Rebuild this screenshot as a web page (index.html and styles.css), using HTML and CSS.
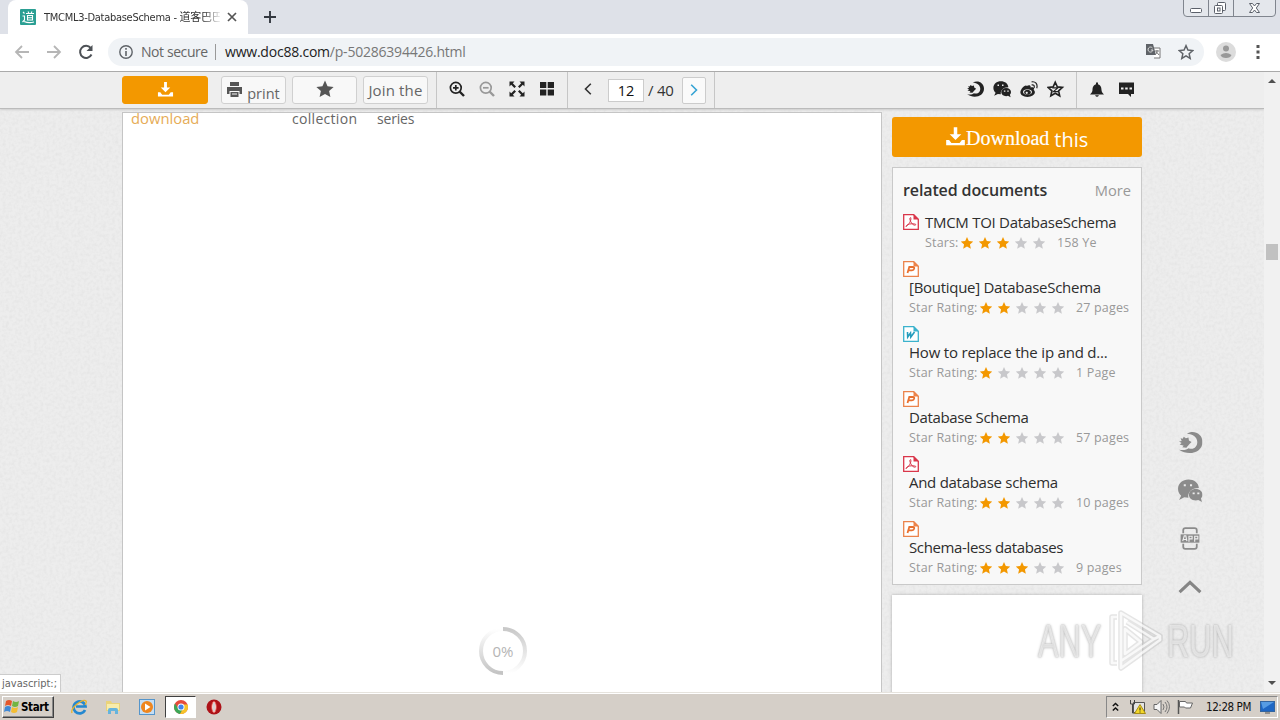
FILE: index.html
```html
<!DOCTYPE html>
<html lang="en">
<head>
<meta charset="utf-8">
<title>TMCML3-DatabaseSchema</title>
<link rel="stylesheet" href="styles.css">
</head>
<body>
<svg class="defs" width="0" height="0">
  <symbol id="star" viewBox="0 0 24 24"><path d="M12 .8l3.400 7.500 8.100.9-6 5.500 1.700 8L12 18.600l-7.200 4.100 1.700-8-6-5.500 8.100-.9z"/></symbol>
  <symbol id="dl" viewBox="0 0 18 18"><path d="M7.500 1h3v6h3.500L9 12 4 7h3.500zM1 12h2.500l2 2.500h7l2-2.500H17v4.500H1z"/></symbol>
  <symbol id="swirl" viewBox="0 0 24 24"><path d="M9 3.500C15-.5 24 3 24 11.500c0 10-13 14-22.500 7.500 5 .8 7.500-.2 9-1.500 5 2 8.500-1.500 8.500-6 0-4.500-4-8-10-8z"/><path d="M3 8l2 .5L6 6.500l2 1.500 2.500-.8.500 2.800 2.500 1.500-2 2-3 3.500-4-.5 1.500-1.500L2 14l2-1.500-2.500-1.500 2.500-.5z"/></symbol>
  <symbol id="wechat" viewBox="0 0 24 24"><path fill-rule="evenodd" d="M10.500 1.500C5 1.500.5 5 .5 10.500c0 3 1.500 5 3 6.500l-2 4 5-2.500 4 .5c-1-5 2.500-9.500 10-9.500-.500-5-4.500-8-10-8zM6 6h2v2H6zm6 0h2v2h-2z"/><path fill-rule="evenodd" d="M17.500 10.500c-4 0-6.500 2.500-6.500 5.500s2.500 5.500 6.500 5.500l2.500-.5 3.500 2-1-3.500c1-1 1.500-2 1.500-3.500 0-3-2.500-5.500-6.500-5.500zM14.500 14h2v1.500h-2zm4.500 0h2v1.500h-2z"/></symbol>
  <symbol id="pdf" viewBox="0 0 16 16"><path d="M.7.7h10l4.600 4.600v10H.7z" fill="#fff" stroke="#d9364a" stroke-width="1.300"/><path d="M10.500 0L16 5.500h-5.500z" fill="#d9364a"/><path d="M7.300 4c-1.300 0 0 3 1.200 5s4 2.800 4.300 1.700S7 9.500 5 10.500s-2.600 2.300-1.700 2S8 7.500 7.900 5 7.300 4 7.300 4z" fill="none" stroke="#d9364a"/></symbol>
  <symbol id="ppt" viewBox="0 0 16 16"><path d="M.7.7h10l4.600 4.600v10H.7z" fill="#fff" stroke="#eb834b" stroke-width="1.300"/><path d="M10.500 0L16 5.500h-5.500z" fill="#eb834b"/><path d="M4.500 12L6.300 6H10c2 0 1.500 3.300-1 3.300H5.700" fill="none" stroke="#e8702f" stroke-width="1.800"/></symbol>
  <symbol id="doc" viewBox="0 0 16 16"><path d="M.7.7h10l4.600 4.600v10H.7z" fill="#fff" stroke="#3bb2cc" stroke-width="1.300"/><path d="M10.500 0L16 5.500h-5.500z" fill="#3bb2cc"/><path d="M4.500 6l.2 5 2.800-4 .3 4L11.500 6" fill="none" stroke="#259dbd" stroke-width="1.600"/></symbol>
</svg>

<header class="tabstrip">
  <div class="tab">
    <svg class="favicon" viewBox="0 0 16 16"><rect width="16" height="16" rx="1" fill="#2b9f93"/><path d="M3 3l1.500 1.500M2.500 7h2v4L2.500 13M4 12.500q5 2 10 .5M6 4.500h8M8 2.500l1 2M12 2.500l-1 2M7.500 6.500h5V11h-5zM7.500 8.700h5" fill="none" stroke="#fff" stroke-width="1.100"/></svg>
    <span class="tab-title">TMCML3-DatabaseSchema - <span class="cjk">道客巴巴</span></span>
    <svg class="tab-close" viewBox="0 0 10 10"><path d="M1 1l8 8M9 1L1 9" stroke="#555" stroke-width="1.700"/></svg>
  </div>
  <svg class="newtab" viewBox="0 0 12 12"><path d="M6 0v12M0 6h12" stroke="#333840" stroke-width="1.900"/></svg>
  <svg class="winbtns" viewBox="0 0 94 17"><path d="M.5 0v13q0 3.500 3.500 3.500h85q3.500 0 3.500-3.500V0M25.500 0v16M50.500 0v16" fill="#e4e7ec" stroke="#80858e"/><g fill="#fff" stroke="#5b606a"><rect x="7.500" y="8.500" width="11" height="4" rx="1"/><rect x="34.500" y="2.500" width="8" height="8" rx="1"/><rect x="31.500" y="5.500" width="8" height="8" rx="1"/><rect x="34.500" y="8" width="2.500" height="3"/><path d="M66.500 3.500h3l2 2.500 2-2.500h3L73.300 8l3.200 4.500h-3l-2-2.500-2 2.500h-3L69.700 8z"/></g></svg>
</header>

<div class="addressbar">
  <svg class="nav-icon" viewBox="0 0 16 16"><path d="M15 8H2M8 2L2 8l6 6" stroke="#b6b6b6"/></svg>
  <svg class="nav-icon" viewBox="0 0 16 16"><path d="M1 8h13M8 2l6 6-6 6" stroke="#b6b6b6"/></svg>
  <svg class="nav-icon reload" viewBox="0 0 16 16"><path d="M13.500 10.500a6 6 0 1 1-.8-6.500" stroke="#4d5156" stroke-width="2"/><path d="M14.500 1v6h-6z" fill="#4d5156" stroke="none"/></svg>
  <div class="omnibox">
    <svg width="14" height="14" viewBox="0 0 14 14"><circle cx="7" cy="7" r="6.200" fill="none" stroke="#5f6368" stroke-width="1.400"/><path d="M7 3v1.700M7 6v5" stroke="#5f6368" stroke-width="1.600"/></svg>
    <span class="secure">Not secure</span>
    <span class="url"><b>www.doc88.com</b>/p-50286394426.html</span>
    <svg class="translate" width="15" height="15" viewBox="0 0 15 15"><path d="M6 4h8v10H8" fill="#fff" stroke="#777"/><path d="M0 0h7l3 11H0z" fill="#5f6368"/><path d="M6.500 4A2.500 2.500 0 1 0 7 6H4.800" fill="none" stroke="#ddd"/><path d="M9 7h4M11 6v1q0 3-2 4M10.500 8l2.500 3" fill="none" stroke="#777"/></svg>
    <svg width="16" height="16" viewBox="0 0 24 24"><path d="M12 2.500l2.900 6.600 7.200.7-5.400 4.800 1.600 7L12 17.800l-6.300 3.800 1.600-7L1.900 9.800l7.200-.7z" fill="none" stroke="#5f6368" stroke-width="2.200"/></svg>
  </div>
  <svg class="avatar" viewBox="0 0 20 20"><circle cx="10" cy="10" r="10" fill="#dcdcdc"/><circle cx="10" cy="6.500" r="3" fill="#999"/><path d="M4.500 13q5.500-4 11 0-1 3-5.500 3t-5.500-3z" fill="#999"/></svg>
  <svg class="menu" viewBox="0 0 4 14"><path d="M.5 0h3v3h-3zm0 5.500h3v3h-3zm0 5.500h3v3h-3z" fill="#555"/></svg>
</div>

<div class="viewport">
  <div class="page">
    <svg class="noise" width="1264" height="620"><filter id="grain"><feTurbulence type="fractalNoise" baseFrequency=".32" numOctaves="2" seed="4" stitchTiles="stitch"/><feColorMatrix values="0 0 0 0 .7  0 0 0 0 .7  0 0 0 0 .7  .8 0 0 0 -.3"/></filter><rect width="1264" height="620" filter="url(#grain)"/></svg>
    <nav class="sitebar">
      <div class="actions">
        <div class="btn primary"><svg width="17" height="17"><use href="#dl"/></svg><span class="wrap dlw">download</span></div>
        <div class="btn print"><svg width="15" height="15" viewBox="0 0 15 15"><path fill-rule="evenodd" d="M3 0h9v4H3zM0 5h15v7h-2.500V9h-10v3H0zm3.500 5h8v5h-8zM5 11.500v1h5v-1z"/></svg><span>print</span></div>
        <div class="btn"><svg width="18" height="18"><use href="#star"/></svg><span class="wrap colw">collection</span></div>
        <div class="btn"><span class="join">Join the</span><span class="wrap serw">series</span></div>
      </div>
      <div class="zooms">
        <svg viewBox="0 0 16 16"><circle cx="6.800" cy="6.800" r="5.400" fill="none" stroke="#222" stroke-width="1.700"/><path d="M10.500 10.500l4.500 4.500" stroke="#222" stroke-width="2.400"/><path d="M6.800 4v5.600M4 6.800h5.600" stroke="#222" stroke-width="1.700"/></svg>
        <svg viewBox="0 0 16 16"><circle cx="6.800" cy="6.800" r="5.400" fill="none" stroke="#999" stroke-width="1.700"/><path d="M10.500 10.500l4.500 4.500" stroke="#999" stroke-width="2.400"/><path d="M4 6.800h5.600" stroke="#999" stroke-width="1.700"/></svg>
        <svg viewBox="0 0 16 16"><path d="M.5.5h5l-1.700 1.700L7 5.400 5.400 7 2.200 3.800.5 5.500zM15.500.5v5l-1.700-1.700L10.600 7 9 5.400l3.200-3.200L10.500.5zM.5 15.500v-5l1.700 1.700L5.400 9 7 10.600l-3.200 3.200 1.700 1.700zM15.500 15.500h-5l1.700-1.700L9 10.600 10.600 9l3.200 3.200 1.700-1.700z"/></svg>
        <svg viewBox="0 0 16 16"><path d="M1 1h6.300v6H1zm7.700 0H15v6H8.700zM1 8.500h6.300v6H1zm7.700 0H15v6H8.700z"/></svg>
      </div>
      <div class="pager">
        <svg width="8" height="12" viewBox="0 0 8 12"><path d="M6.800.8L1.500 6l5.300 5.200" fill="none" stroke="#333" stroke-width="1.600"/></svg>
        <span class="pageno">12</span><span class="total">/ 40</span>
        <span class="next"><svg width="8" height="12" viewBox="0 0 8 12"><path d="M1.200.8L6.500 6l-5.300 5.200" fill="none" stroke="#35a3d4" stroke-width="1.600"/></svg></span>
      </div>
      <div class="share">
        <svg viewBox="0 0 24 24"><use href="#swirl"/></svg>
        <svg viewBox="0 0 24 24"><use href="#wechat"/></svg>
        <svg viewBox="0 0 24 24"><path fill-rule="evenodd" d="M9 8c3-2 6-1 5 2 5-1 6 2 4 3 5 4-1 9.500-8 9.500S-1 19 1 14c2-4 6-8 8-6zM4 16c0 5 12 5 12 0s-12-5-12 0z"/><path fill-rule="evenodd" d="M5.500 16.500c0-4.500 9-4.500 9 0s-9 4-9 0zm2 .5c0 2 3 2 3 0s-3-2-3 0z"/><path d="M15.500 6.500c3-.5 4 1 3.300 4M15.500 2.500c5-1 8.500 3 6.800 8.500" fill="none" stroke="#222" stroke-width="1.600"/></svg>
        <svg viewBox="0 0 24 24"><path d="M11 3l2.800 6.200 6.700.7-5 4.500 1.400 6.600-5.900-3.400L5.100 21l1.400-6.600-5-4.500 6.700-.7z" fill="none" stroke="#222" stroke-width="2.200"/><path d="M7 10.500h7.500l-6 5H15" fill="none" stroke="#222" stroke-width="1.600"/></svg>
      </div>
      <div class="notify">
        <svg width="16" height="16" viewBox="0 0 16 16"><path d="M7 .5h2v1.700c3 .8 3.500 3.800 3.500 5.800 0 2 1.200 3 2.500 4.500H1C2.300 11 3.500 10 3.500 8c0-2 .5-5 3.500-5.800zM6 13.200h4q-2 3-4 0z"/></svg>
        <svg width="17" height="16" viewBox="0 0 17 16"><path fill-rule="evenodd" d="M1 .5h15V12h-3v3l-3-3H1zM3 5.500v2h2.500v-2zm4.200 0v2h2.500v-2zm4.300 0v2H14v-2z"/></svg>
      </div>
    </nav>
    <main class="columns">
      <section class="document">
        <div class="loader">
          <svg viewBox="0 0 50 50"><defs><linearGradient id="ga" x1="0" y1="0" x2="0" y2="1"><stop offset="0" stop-color="#c9c9c9"/><stop offset="1" stop-color="#fff"/></linearGradient><linearGradient id="gb" x1="0" y1="1" x2="0" y2="0"><stop offset="0" stop-color="#c4c4c4"/><stop offset="1" stop-color="#fff"/></linearGradient></defs><path d="M25 3a22 22 0 0 1 0 44" fill="none" stroke="url(#ga)" stroke-width="4"/><path d="M25 47a22 22 0 0 1 0-44" fill="none" stroke="url(#gb)" stroke-width="4"/></svg>
          <span>0%</span>
        </div>
      </section>
      <aside class="side">
        <div class="bigbtn"><svg width="21" height="21"><use href="#dl"/></svg><span class="serif">Download</span><span class="this">this</span></div>
        <div class="related">
          <div class="rel-head"><h2>related documents</h2><span>More</span></div>
          <div class="item first"><svg class="ft"><use href="#pdf"/></svg><div class="info"><div class="name">TMCM TOI DatabaseSchema</div><div class="meta"><span class="lbl l1">Stars:</span><span class="stars"><svg class="on"><use href="#star"/></svg><svg class="on"><use href="#star"/></svg><svg class="on"><use href="#star"/></svg><svg><use href="#star"/></svg><svg><use href="#star"/></svg></span><span>158 Ye</span></div></div></div>
          <div class="item"><svg class="ft"><use href="#ppt"/></svg><div class="info"><div class="name">[Boutique] DatabaseSchema</div><div class="meta"><span class="lbl">Star Rating:</span><span class="stars"><svg class="on"><use href="#star"/></svg><svg class="on"><use href="#star"/></svg><svg><use href="#star"/></svg><svg><use href="#star"/></svg><svg><use href="#star"/></svg></span><span>27 pages</span></div></div></div>
          <div class="item"><svg class="ft"><use href="#doc"/></svg><div class="info"><div class="name wide">How to replace the ip and d...</div><div class="meta"><span class="lbl">Star Rating:</span><span class="stars"><svg class="on"><use href="#star"/></svg><svg><use href="#star"/></svg><svg><use href="#star"/></svg><svg><use href="#star"/></svg><svg><use href="#star"/></svg></span><span>1 Page</span></div></div></div>
          <div class="item"><svg class="ft"><use href="#ppt"/></svg><div class="info"><div class="name tight">Database Schema</div><div class="meta"><span class="lbl">Star Rating:</span><span class="stars"><svg class="on"><use href="#star"/></svg><svg class="on"><use href="#star"/></svg><svg><use href="#star"/></svg><svg><use href="#star"/></svg><svg><use href="#star"/></svg></span><span>57 pages</span></div></div></div>
          <div class="item"><svg class="ft"><use href="#pdf"/></svg><div class="info"><div class="name">And database schema</div><div class="meta"><span class="lbl">Star Rating:</span><span class="stars"><svg class="on"><use href="#star"/></svg><svg class="on"><use href="#star"/></svg><svg><use href="#star"/></svg><svg><use href="#star"/></svg><svg><use href="#star"/></svg></span><span>10 pages</span></div></div></div>
          <div class="item"><svg class="ft"><use href="#ppt"/></svg><div class="info"><div class="name tight">Schema-less databases</div><div class="meta"><span class="lbl">Star Rating:</span><span class="stars"><svg class="on"><use href="#star"/></svg><svg class="on"><use href="#star"/></svg><svg class="on"><use href="#star"/></svg><svg><use href="#star"/></svg><svg><use href="#star"/></svg></span><span>9 pages</span></div></div></div>
        </div>
        <div class="advert"></div>
      </aside>
    </main>
    <div class="floaters">
      <svg viewBox="0 0 24 24"><use href="#swirl"/></svg>
      <svg viewBox="0 0 24 24"><use href="#wechat"/></svg>
      <svg viewBox="0 0 24 24"><path d="M5.500 7V4q0-2 2-2h9q2 0 2 2v3M5.500 17v3q0 2 2 2h9q2 0 2-2v-3" fill="none" stroke="#8b8b8b" stroke-width="1.700"/><rect x="3" y="8" width="18" height="8"/><path d="M5 14.500l1.500-5H8l1 5M5.500 13H9M11 15V9.800h3v2.500h-3M16.500 15V9.800h3v2.500h-3" fill="none" stroke="#eee" stroke-width="1.100"/></svg>
      <svg viewBox="0 0 24 24"><path d="M2 17.500L12 8l10 9.500" fill="none" stroke="#858585" stroke-width="3"/></svg>
    </div>
    <div class="watermark">
      <span>ANY</span>
      <svg viewBox="0 0 56 64"><defs><path id="play" d="M10 8H5v46h5M14 52V4l39 23-6 3-27-17M18 20v25l16-12zM53 27v4L14 59v-7l33-22"/></defs><g fill="none" stroke-linejoin="round"><use href="#play" stroke="#999" stroke-opacity=".25" stroke-width="5.500"/><use href="#play" stroke="#fff" stroke-opacity=".75" stroke-width="2.600"/></g></svg>
      <span>RUN</span>
    </div>
    <div class="status">javascript:;</div>
  </div>
  <div class="scrollbar"><i class="up"></i><i class="thumb"></i><i class="down"></i></div>
</div>

<footer class="taskbar">
  <div class="start"><svg width="17" height="17" viewBox="0 0 17 17"><path d="M2 3q3-2 6 0L7 8Q4 6 1 8z" fill="#e5572b"/><path d="M9 3q3 2 6 0l-1 5q-3 2-6 0z" fill="#72b543"/><path d="M1 9q3-2 6 0l-1 5q-3-2-6 0z" fill="#4189d5"/><path d="M8 9q3 2 6 0l-1 5q-3 2-6 0z" fill="#f4bd32"/></svg><b>Start</b></div>
  <div class="apps">
    <svg viewBox="0 0 16 16"><path d="M14 11a6 6 0 1 1 .5-3.500H5" fill="none" stroke="#2488d0" stroke-width="2.700"/><path d="M1 14C-1 9 12-1 15 2q1 1-1 4" fill="none" stroke="#e9b42c" stroke-width="1.300"/></svg>
    <svg viewBox="0 0 16 16"><path d="M1 2h5l1 2h8v8H1z" fill="#ead37a"/><path d="M2 5h12v6H2z" fill="#f8ecab"/><path d="M3 15v-4q0-2 2-2h6q2 0 2 2v4h-3v-3H6v3z" fill="#66b4dd"/></svg>
    <svg viewBox="0 0 16 16"><rect x=".5" y=".5" width="15" height="15" fill="#c5def4" stroke="#5595cb"/><circle cx="8" cy="8" r="6" fill="#ef861e"/><path d="M6 4.500L11.500 8 6 11.500z" fill="#fff"/></svg>
    <span class="running"><svg viewBox="0 0 16 16"><circle cx="8" cy="8" r="7" fill="#e64b3b"/><path d="M2 4.500A7 7 0 0 0 7 15l3-5H5.500z" fill="#3ba757"/><path d="M14.500 5.500A7 7 0 0 1 7 15l4-7-1-2.500z" fill="#f6c32a"/><circle cx="8" cy="8" r="3.500" fill="#fff"/><circle cx="8" cy="8" r="2.600" fill="#4283ed"/></svg></span>
    <svg viewBox="0 0 16 16"><circle cx="8" cy="8" r="7.500" fill="#ad1218"/><ellipse cx="8" cy="8" rx="2.200" ry="5.500" fill="#fff" stroke="#e75a52"/><path d="M8 4v8" stroke="#aaa"/></svg>
  </div>
  <div class="tray">
    <svg width="7" height="10" viewBox="0 0 7 10"><path d="M.8 4l2.700-2.500L6.200 4M.8 8.500L3.500 6l2.700 2.500" fill="none" stroke="#111" stroke-width="1.500"/></svg>
    <svg class="net" width="17" height="16" viewBox="0 0 17 16"><path d="M4.500 3.500h11v10h-11z" fill="#e4e4e4" stroke="#555"/><path d="M1.500 1v4h4V1M3.500 5v9h3" fill="none" stroke="#444"/><path d="M11 5.500l5.500 9h-11z" fill="#f3d729" stroke="#a88d15"/><path d="M11 8.500v3M11 12.500v1" stroke="#222"/></svg>
    <svg class="vol" width="17" height="16" viewBox="0 0 17 16"><path d="M1 5.500h3l4-4v13l-4-4H1z" fill="#f5f5f5" stroke="#666"/><path d="M10 5q2 3 0 6M12 3q4 5 0 10M14 1.500q5 6 0 13" fill="none" stroke="#777"/></svg>
    <svg class="flag" width="17" height="16" viewBox="0 0 17 16"><path d="M1.500 1v14" stroke="#555" stroke-width="1.500"/><path d="M2.500 2.500h6l1 1.500h6l-2 5H8.500l-1-1h-5z" fill="#fff" stroke="#666"/></svg>
    <span class="clock">12:28 PM</span>
    <svg width="15" height="14" viewBox="0 0 15 14"><rect x=".5" y="1.500" width="14" height="10" fill="#1f67c4" stroke="#34659f"/><path d="M1 2h13L3 9z" fill="#579ce3"/><path d="M5 13h5" stroke="#555"/></svg>
  </div>
</footer>
</body>
</html>
```
FILE: styles.css
```css
* { box-sizing: border-box; }
body { margin: 0; width: 1280px; height: 720px; overflow: hidden; display: flex; flex-direction: column; font-family: "Open Sans", "Noto Sans", sans-serif; color: #333; }
svg { display: block; flex: none; }
.defs { position: absolute; }
span, b, h2 { white-space: nowrap; }

.tabstrip { height: 34px; flex: none; background: #dee1e8; display: flex; align-items: flex-start; }
.tab { width: 240px; height: 34px; margin-left: 8px; padding: 0 11px 0 12px; background: #fff; border-radius: 8px 8px 0 0; display: flex; align-items: center; }
.favicon { width: 16px; height: 16px; }
.tab-title { width: 176px; margin-left: 8px; overflow: hidden; font: 11px/16px "DejaVu Sans Condensed", "DejaVu Sans", sans-serif; letter-spacing: -.28px; color: #333; -webkit-mask-image: linear-gradient(90deg, #000 160px, transparent 178px); mask-image: linear-gradient(90deg, #000 160px, transparent 178px); }
.cjk { font-family: "Noto Sans CJK SC", sans-serif; }
.tab-close { width: 10px; height: 10px; margin-left: 7px; }
.newtab { width: 12px; height: 12px; margin: 11px 0 0 16px; }
.winbtns { width: 94px; height: 17px; margin-left: auto; margin-right: 3px; }

.addressbar { height: 38px; flex: none; background: #fff; border-bottom: 1px solid #aaa; display: flex; align-items: center; padding: 0 20px 2px 14px; }
.nav-icon { width: 16px; height: 16px; margin-right: 16px; fill: none; stroke-width: 1.8; }
.reload { margin-right: 14px; }
.omnibox { width: 1096px; height: 28px; border-radius: 14px; background: #f0f3f6; display: flex; align-items: center; padding: 0 10px 0 11px; font-size: 14px; }
.secure { margin-left: 8px; padding-right: 8px; border-right: 1px solid #999; line-height: 16px; width: 75px; color: #666; letter-spacing: -.42px; }
.url { margin-left: 9px; color: #777; letter-spacing: -.22px; }
.url b { font-weight: 400; color: #222; }
.translate { margin-left: auto; margin-right: 17px; }
.avatar { width: 20px; height: 20px; margin-left: 12px; }
.menu { width: 4px; height: 14px; margin-left: auto; }

.viewport { height: 620px; flex: none; display: flex; }
.page { position: relative; width: 1264px; overflow: hidden; background: #ededed; display: flex; flex-direction: column; }
.noise { position: absolute; left: 0; top: 0; }
.sitebar { position: relative; z-index: 2; height: 37px; flex: none; padding-left: 122px; background: #eee; border-bottom: 1px solid #bbb; box-shadow: 0 1px 2px #ccc; display: flex; fill: #222; }
.sitebar > div { display: flex; align-items: center; height: 36px; }
.actions { gap: 6px; width: 315px; border-right: 1px solid #c6c6c6; }
.btn { position: relative; width: 65px; height: 28px; border: 1px solid #d0d0d0; border-radius: 3px; background: #f8f8f8; display: flex; align-items: center; justify-content: center; color: #666; fill: #555; font-size: 15px; }
.btn > svg { margin-bottom: 2px; }
.primary { width: 86px; margin-right: 7px; background: #f39800; border-color: #f39800; fill: #fff; }
.print span { margin: 6px 0 0 5px; font-size: 14.5px; }
.join { letter-spacing: .15px; }
.wrap { position: absolute; top: 31px; line-height: 22px; font-size: 14px; }
.dlw { left: 8px; top: 30px; color: #e6ac57; clip-path: inset(6px 0 0); font-size: 14.8px; }
.colw { left: -1px; letter-spacing: .3px; }
.serw { left: 13px; letter-spacing: -.2px; }
.zooms { width: 131px; padding-left: 12px; gap: 14px; border-right: 1px solid #c6c6c6; }
.zooms svg { width: 16px; height: 16px; margin-bottom: 2px; }
.pager { width: 147px; padding-left: 16px; border-right: 1px solid #c6c6c6; font-size: 15px; }
.pager > svg { margin-bottom: 2px; }
.pageno { width: 36px; height: 23px; margin-left: 16px; border: 1px solid #ccc; background: #fff; text-align: center; line-height: 21px; color: #111; font-size: 14.5px; }
.total { margin-left: 4px; width: 34px; letter-spacing: -.2px; }
.next { width: 24px; height: 27px; border: 1px solid #ccc; border-radius: 2px; background: #fafafa; display: flex; align-items: center; justify-content: center; }
.share { width: 362px; padding-left: 251px; gap: 9px; border-right: 1px solid #c6c6c6; }
.share svg { width: 18px; height: 18px; margin-bottom: 2px; }
.notify { padding-left: 12px; gap: 13px; }

.columns { position: relative; flex: 1; min-height: 0; padding: 3px 0 0 122px; display: flex; gap: 10px; }
.document { width: 760px; background: #fff; border: 1px solid #c5c5c5; border-bottom: 0; padding: 513px 0 0 355px; }
.loader { width: 50px; height: 50px; display: grid; place-items: center; color: #b5b5b5; font-size: 15px; }
.loader > * { grid-area: 1 / 1; }
.loader svg { width: 50px; height: 50px; }
.side { width: 250px; padding-top: 5px; }
.bigbtn { height: 40px; border-radius: 3px; background: #f39800; color: #fff; fill: #fff; display: flex; align-items: center; padding-left: 53px; }
.bigbtn svg { margin-bottom: 2px; }
.serif { font: 20px "Liberation Serif", serif; margin-top: 3px; -webkit-text-stroke: .2px #fff; }
.this { margin: 5px 0 0 5px; font-size: 20px; }
.related { height: 418px; margin-top: 10px; border: 1px solid #c9c9c9; background: #f8f8f8; padding: 0 10px; }
.rel-head { height: 46px; padding-bottom: 2px; display: flex; justify-content: space-between; align-items: center; font-size: 14.7px; color: #999; }
.rel-head h2 { margin: 0; font-size: 16px; font-weight: 600; letter-spacing: -.12px; color: #333; }
.item { height: 65px; white-space: nowrap; }
.first { height: 47px; display: flex; gap: 6px; }
.ft { width: 16px; height: 16px; }
.info { padding-left: 6px; }
.first .info { padding: 0; margin-top: -2px; }
.name { font-size: 15px; line-height: 21px; height: 20px; letter-spacing: -.28px; color: #2e2e2e; }
.wide { letter-spacing: -.2px; }
.tight { letter-spacing: -.37px; }
.meta { display: flex; align-items: center; height: 20px; font-size: 12.5px; letter-spacing: .16px; color: #999; }
.lbl { width: 70px; }
.l1 { width: 35px; }
.stars { display: flex; gap: 4px; margin-right: 11px; padding-top: 2px; fill: #c8c8cb; }
.stars svg { width: 14px; height: 14px; padding: .6px; }
.stars .on { fill: #f39800; }
.advert { height: 110px; margin-top: 10px; background: #fff; box-shadow: 0 0 3px #aaa; }
.floaters { position: absolute; left: 1177px; top: 358px; display: flex; flex-direction: column; gap: 23px; fill: #8b8b8b; }
.floaters svg { width: 26px; height: 25px; }
.watermark { position: absolute; left: 1038px; top: 537px; width: 196px; height: 64px; display: flex; align-items: center; color: rgba(255,255,255,.65); }
.watermark span { width: 65px; font: 46px/64px "Liberation Sans", sans-serif; transform: scaleX(.67); transform-origin: 0 50%; text-shadow: 0 0 3px #999; -webkit-text-stroke: .6px #ddd; }
.watermark svg { width: 56px; height: 64px; margin: 0 4px; }
.status { position: absolute; left: 0; bottom: 0; width: 61px; height: 18px; padding-left: 2px; background: #fff; border: 1px solid #ccc; border-left: 0; border-bottom: 0; font: 11px/17px "DejaVu Sans Condensed", sans-serif; letter-spacing: 0; color: #666; }
.scrollbar { width: 16px; background: #f1f1f1; display: flex; flex-direction: column; align-items: center; }
.up { margin-top: 7px; border: 4px solid transparent; border-top: 0; border-bottom: 4px solid #505050; }
.thumb { width: 12px; height: 16px; margin-top: 161px; background: #c1c1c1; }
.down { margin-top: auto; margin-bottom: 7px; border: 4px solid transparent; border-bottom: 0; border-top: 4px solid #505050; }

.taskbar { height: 28px; flex: none; background: #d5cfc8; border-top: 1px solid #e6e3dd; box-shadow: inset 0 1px #fff; display: flex; align-items: center; padding: 0 2px 0; font-family: "DejaVu Sans Condensed", sans-serif; }
.start { width: 52px; height: 22px; border: 1px solid; border-color: #fff #404040 #404040 #fff; box-shadow: inset -1px -1px #888; display: flex; align-items: center; padding-left: 1px; font-size: 11.5px; color: #000; }
.start b { letter-spacing: -.35px; }
.apps { display: flex; align-items: center; gap: 18px; margin-left: 17px; }
.apps svg { width: 16px; height: 16px; }
.running { width: 31px; height: 22px; margin: 0 -8px; border: 1px solid; border-color: #404040 #fff #fff #404040; background: #fff; display: flex; align-items: center; justify-content: center; }
.tray { width: 172px; height: 22px; margin-left: auto; border: 1px solid; border-color: #888 #fff #fff #888; display: flex; align-items: center; padding-left: 5px; }
.net { margin-left: 10px; }
.vol { margin-left: 7px; }
.flag { margin-left: 7px; }
.clock { width: 47px; margin: 0 7px 0 12px; font-size: 11.5px; letter-spacing: -.42px; color: #111; }
```
